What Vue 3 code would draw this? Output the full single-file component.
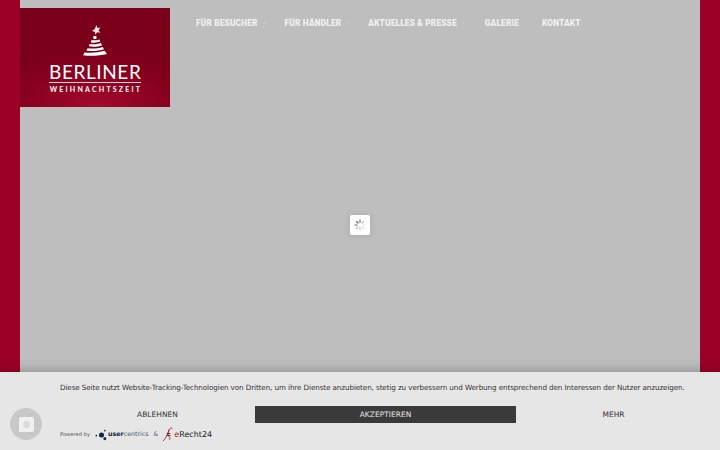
<script setup>
const navItems = [
  { label: "FÜR BESUCHER", dot: true },
  { label: "FÜR HÄNDLER", dot: true },
  { label: "AKTUELLES & PRESSE", dot: true },
  { label: "GALERIE", dot: false },
  { label: "KONTAKT", dot: false },
];
</script>

<template>
  <div class="page">
    <div class="main">
      <header class="header">
        <a class="logo">
          <svg class="tree" width="32" height="34" viewBox="0 0 32 34">
            <path d="M17.500 0l.8 3 3-.4-1.800 2.600 1.800 2.600-3.200-.5-1.600 2.500-.7-3-3-.9 2.800-1.600z" fill="#f6e9ea" />
            <rect x="14.400" y="11" width="3" height="3" fill="#fff" />
            <path d="M12.500 15c2.500.6 5.500.4 8-.6l.8 2.200c-3 1.200-6.700 1.400-9.400.8z" fill="#fff" />
            <path d="M10.600 18.900c3.500.8 8 .4 11.400-1l1 2.300c-4 1.600-9.200 2-13.200 1.100z" fill="#fff" />
            <path d="M8.600 23.200c5 .8 10.500.3 15.200-1.300l1.200 2.400c-5.400 1.800-12 2.300-17.600 1.300z" fill="#fff" />
            <path d="M5.600 27.400c6.500.8 14 .2 20-1.600l2.400 3.200c-7 1.800-17 2.200-24 1.200z" fill="#fff" />
          </svg>
          <span class="brand">BERLINER</span>
          <span class="tagline">WEIHNACHTSZEIT</span>
        </a>
        <nav class="nav">
          <a v-for="item in navItems" :key="item.label" class="nav-item">
            {{ item.label }}
            <i v-if="item.dot" class="nav-dot"></i>
          </a>
        </nav>
      </header>
      <div class="loader">
        <svg width="12" height="12" viewBox="0 0 12 12">
          <g stroke-width="1.400" stroke-linecap="round" fill="none">
            <path d="M6 1v2.200" stroke="#8a8a8a" />
            <path d="M2.500 2.500l1.500 1.500" stroke="#6f6f6f" />
            <path d="M1 6h2.200" stroke="#9c9c9c" />
            <path d="M2.500 9.500L4 8" stroke="#bcbcbc" />
            <path d="M6 11V8.800" stroke="#d4d4d4" />
            <path d="M9.500 9.500L8 8" stroke="#e4e4e4" />
            <path d="M11 6H8.800" stroke="#ececec" />
            <path d="M9.500 2.500L8 4" stroke="#c4c4c4" />
          </g>
        </svg>
      </div>
    </div>

    <div class="consent">
      <p class="consent-text">
        Diese Seite nutzt Website-Tracking-Technologien von Dritten, um ihre Dienste anzubieten, stetig zu verbessern und Werbung entsprechend den Interessen der Nutzer anzuzeigen.
      </p>
      <div class="consent-actions">
        <button class="btn">ABLEHNEN</button>
        <button class="btn btn-accept">AKZEPTIEREN</button>
        <button class="btn">MEHR</button>
      </div>
      <div class="powered">
        <span class="powered-by">Powered by</span>
        <svg class="uc-mark" width="13" height="12" viewBox="0 0 14 12">
          <circle cx="7" cy="6" r="2.700" fill="#12233f" />
          <circle cx="1.400" cy="6.600" r="0.900" fill="#12233f" />
          <circle cx="10.600" cy="1.200" r="0.900" fill="#12233f" />
          <circle cx="10.600" cy="10" r="1.600" fill="#12233f" />
        </svg>
        <span class="uc-name"><b>user</b>centrics</span>
        <span class="amp">&amp;</span>
        <svg class="er-mark" width="12" height="15" viewBox="0 0 12 15">
          <path d="M1 14C4 11 6 7 7 3c.4-1.600 2-2.400 3.400-1.600M7 3c-1.500 3-1 6 .6 7.400.8.8.4 2-.8 2.400" fill="none" stroke="#b0183a" stroke-width="0.900" />
          <path d="M4.500 6.500h4M4.500 8.500h4" stroke="#222" stroke-width="0.700" />
        </svg>
        <span class="er-name"><span class="er-e">e</span>Recht24</span>
      </div>
      <div class="privacy-fab">
        <span class="privacy-icon"><i></i></span>
      </div>
    </div>
  </div>
</template>

<style scoped>
.page {
  position: relative;
  height: 450px;
  overflow: hidden;
  padding: 0 20px;
  background: #9c0027;
  box-sizing: border-box;
}

.main {
  position: relative;
  height: 100%;
  background: #bebebe;
}

.header {
  display: flex;
  align-items: flex-start;
  padding-top: 8px;
}

.logo {
  width: 150px;
  height: 99px;
  flex: none;
  display: flex;
  flex-direction: column;
  align-items: center;
  background: radial-gradient(ellipse 75% 60% at 50% 100%, #a4092c 0%, #85001d 70%, #7b0019 100%);
  color: #fff;
  box-sizing: border-box;
  padding-top: 17px;
}

.tree {
  display: block;
  margin-bottom: 4px;
}

.brand {
  width: 92px;
  font-family: "Lato", "Liberation Sans", sans-serif;
  font-size: 19px;
  line-height: 18px;
  letter-spacing: 0.600px;
  text-align: center;
  border-bottom: 1px solid #f0d5da;
  padding-bottom: 1px;
  white-space: nowrap;
}

.tagline {
  font-family: "Lato", "Liberation Sans", sans-serif;
  font-weight: 700;
  font-size: 7px;
  line-height: 10px;
  letter-spacing: 2.200px;
  margin-top: 1px;
  margin-right: -2px;
  white-space: nowrap;
}

.nav {
  display: flex;
  padding-left: 26px;
  padding-top: 9px;
}

.nav-item {
  position: relative;
  font-family: "Roboto", "Liberation Sans", sans-serif;
  font-weight: 900;
  font-size: 8.300px;
  line-height: 12px;
  letter-spacing: 0.170px;
  color: #f0f0f0;
  white-space: nowrap;
  margin-right: 27px;
}

.nav-item:nth-child(3) {
  margin-right: 28px;
}

.nav-item:nth-child(4) {
  margin-right: 23px;
}

.nav-dot {
  position: absolute;
  right: -8px;
  top: 5px;
  width: 2px;
  height: 2px;
  background: #c6c6c6;
}

.loader {
  position: absolute;
  left: 330px;
  top: 215px;
  width: 20px;
  height: 20px;
  display: flex;
  align-items: center;
  justify-content: center;
  background: #fff;
  border-radius: 2px;
  box-shadow: 0 0 6px rgba(0, 0, 0, 0.12);
}

.consent {
  position: absolute;
  left: 0;
  right: 0;
  bottom: 0;
  height: 78px;
  background: #e6e6e6;
  box-shadow: 0 0 12px rgba(0, 0, 0, 0.3);
  font-family: "DejaVu Sans", sans-serif;
  color: #333;
  text-rendering: geometricPrecision;
}

.consent-text {
  margin: 0;
  padding: 10px 0 0 60px;
  font-size: 7.200px;
  letter-spacing: -0.100px;
  line-height: 11px;
  white-space: nowrap;
}

.consent-actions {
  display: grid;
  grid-template-columns: 195px 261px 195px;
  margin: 13px 0 0 60px;
  width: 651px;
}

.btn {
  height: 17px;
  padding: 0;
  border: 0;
  background: transparent;
  font-family: "DejaVu Sans", sans-serif;
  font-size: 7.500px;
  color: #333;
  text-rendering: geometricPrecision;
}

.btn-accept {
  background: #3a3a3a;
  color: #e6e6e6;
}

.powered {
  display: flex;
  align-items: center;
  margin: 3px 0 0 60px;
  height: 17px;
}

.powered-by {
  font-size: 5.200px;
  color: #555;
  margin-right: 5px;
}

.uc-mark {
  margin-right: 0;
}

.uc-name {
  font-size: 6.300px;
  color: #4a5568;
  margin-right: 5px;
}

.uc-name b {
  color: #12233f;
}

.amp {
  font-size: 6px;
  color: #666;
  margin-right: 4px;
}

.er-mark {
  margin-right: 0;
}

.er-name {
  font-size: 8px;
  color: #222;
}

.er-e {
  color: #b0183a;
}

.privacy-fab {
  position: absolute;
  left: 10px;
  top: 36px;
  width: 32px;
  height: 32px;
  border-radius: 50%;
  background: #c8c8c8;
  display: flex;
  align-items: center;
  justify-content: center;
}

.privacy-icon {
  width: 15px;
  height: 15px;
  background: #f0f0f0;
  border-radius: 2px 2px 2px 0;
  display: flex;
  align-items: center;
  justify-content: center;
}

.privacy-icon i {
  width: 7px;
  height: 7px;
  border-radius: 50%;
  background: #dadada;
}
</style>
